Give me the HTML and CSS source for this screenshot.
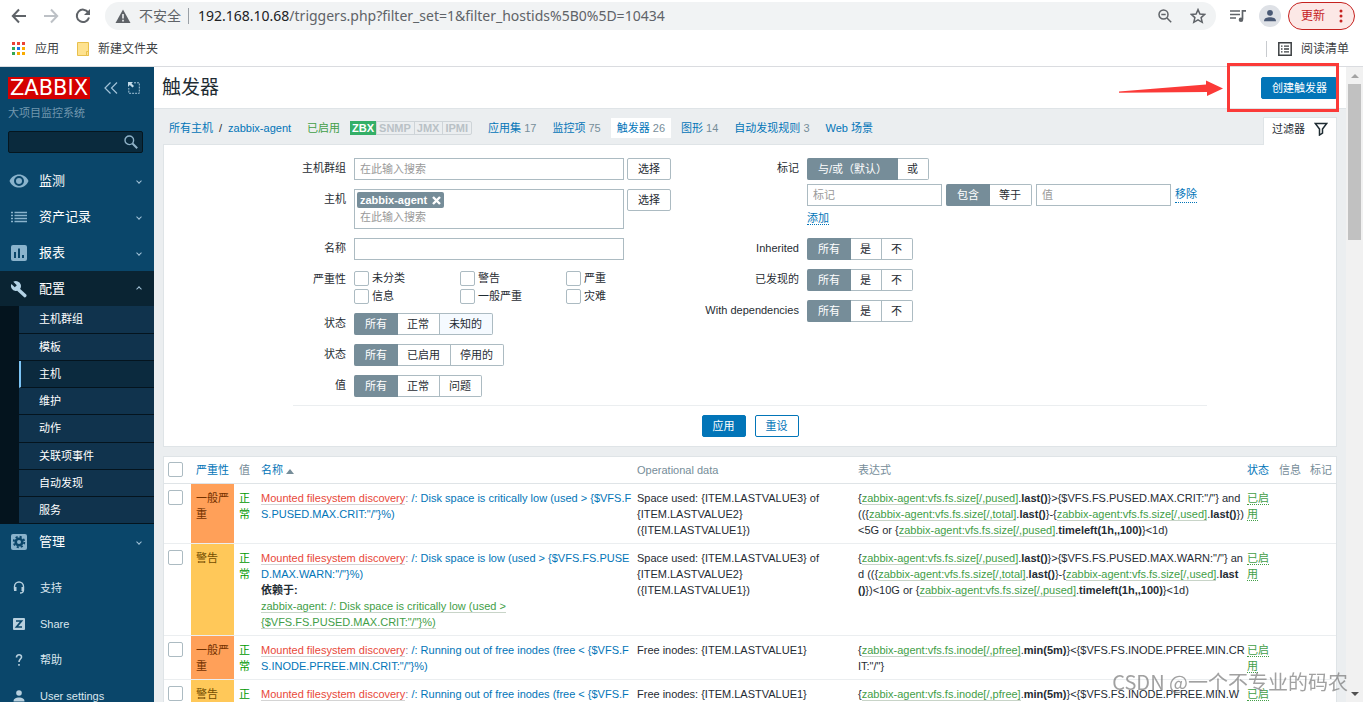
FILE: index.html
```html
<!DOCTYPE html>
<html lang="zh-CN">
<head>
<meta charset="utf-8">
<title>触发器</title>
<link rel="stylesheet" href="styles.css">
</head>
<body>
<div class="browser">
  <div class="toolbar">
    <button class="tool" aria-label="后退"><svg width="16" height="16" viewBox="0 0 16 16"><path d="M15 8H2M8 1.500L1.800 8L8 14.500" fill="none" stroke="#5f6368" stroke-width="2"/></svg></button>
    <button class="tool" aria-label="前进"><svg width="16" height="16" viewBox="0 0 16 16"><path d="M1 8H14M8 1.500L14.200 8L8 14.500" fill="none" stroke="#bdc1c6" stroke-width="2"/></svg></button>
    <button class="tool" aria-label="重新加载"><svg width="16" height="16" viewBox="0 0 16 16"><path d="M13.200 4.400A6.200 6.200 0 1 0 14 9.500" fill="none" stroke="#5f6368" stroke-width="2"/><path d="M15 1V7H9Z" fill="#5f6368"/></svg></button>
    <div class="omnibox">
      <svg width="16" height="15" viewBox="0 0 16 15"><path d="M8 0.500L15.500 14H0.500Z" fill="#5f6368"/><path d="M8 5V9.500M8 10.800V12.400" stroke="#f1f3f4" stroke-width="1.600"/></svg>
      <span class="insecure">不安全</span>
      <span class="url"><b>192.168.10.68</b>/triggers.php?filter_set=1&amp;filter_hostids%5B0%5D=10434</span>
      <svg width="14" height="14" viewBox="0 0 14 14"><g fill="none" stroke="#5f6368" stroke-width="1.500"><circle cx="5.500" cy="5.500" r="4.500"/><path d="M9 9L13.200 13.200M3.300 5.500H7.700"/></g></svg>
      <svg class="star" width="16" height="16" viewBox="0 0 16 16"><path d="M8 1.600L9.900 6L14.700 6.400L11.100 9.600L12.200 14.300L8 11.800L3.800 14.300L4.900 9.600L1.300 6.400L6.100 6Z" fill="none" stroke="#5f6368" stroke-width="1.500"/></svg>
    </div>
    <svg class="media" width="16" height="14" viewBox="0 0 16 14"><path d="M0 2H10M0 5.500H10M0 9H6" stroke="#5f6368" stroke-width="1.700"/><path d="M12.500 10V1.800H16" fill="none" stroke="#5f6368" stroke-width="1.700"/><circle cx="11" cy="10.700" r="2.300" fill="#5f6368"/></svg>
    <svg class="avatar" width="22" height="22" viewBox="0 0 22 22"><circle cx="11" cy="11" r="11" fill="#dee1e6"/><circle cx="11" cy="7.800" r="2.900" fill="#4a5a75"/><path d="M5 16.200C5 13 8 12.200 11 12.200S17 13 17 16.200Z" fill="#4a5a75"/></svg>
    <button class="update">更新<svg width="4" height="14" viewBox="0 0 4 14"><g fill="#c5221f"><circle cx="2" cy="2" r="1.500"/><circle cx="2" cy="7" r="1.500"/><circle cx="2" cy="12" r="1.500"/></g></svg></button>
  </div>
  <div class="bookmarks">
    <a href="#" class="mark"><svg width="14" height="14" viewBox="0 0 14 14"><path d="M0 0h3v3H0zM5 0h3v3H5zM10 0h3v3h-3z" fill="#ea4335"/><path d="M0 5h3v3H0zM0 10h3v3H0z" fill="#34a853"/><path d="M5 5h3v3H5z" fill="#1a73e8"/><path d="M10 5h3v3h-3zM10 10h3v3h-3zM5 10h3v3H5z" fill="#f9ab00"/></svg>应用</a>
    <a href="#" class="mark folder"><svg width="12" height="14" viewBox="0 0 12 14"><path d="M.5.500h11v13H.5z" fill="#fee28f" stroke="#e8c04d"/><path d="M9.500 9.500h2v4h-2z" fill="#fee28f" stroke="#e8c04d"/></svg>新建文件夹</a>
    <a href="#" class="mark reading"><svg width="14" height="14" viewBox="0 0 14 14"><path d="M.8.800h12.400v12.400H.8z" fill="none" stroke="#3c4043" stroke-width="1.500"/><path d="M3 4.200h1.500M6 4.200h5M3 7h1.500M6 7h5M3 9.800h1.500M6 9.800h5" stroke="#3c4043" stroke-width="1.300"/></svg>阅读清单</a>
  </div>
</div>

<div class="page">
  <aside class="sidebar">
    <div class="brand">
      <a href="#" class="logo">ZABBIX</a>
      <svg width="14" height="12" viewBox="0 0 14 12"><path d="M6.500 .5L1 6L6.500 11.500M13 .5L7.500 6L13 11.500" fill="none" stroke="#a3c3d8" stroke-width="1.200"/></svg>
      <svg width="12" height="12" viewBox="0 0 12 12"><path d="M6 .8H11.300V11.300H.8V6" fill="none" stroke="#a3c3d8" stroke-dasharray="2 1"/><path d="M0 0H5L3.500 1.500L6 4L4.500 5.500L1.800 3L0 5Z" fill="#c3dbe9"/></svg>
    </div>
    <div class="server">大项目监控系统</div>
    <div class="search"><input type="text" aria-label="搜索"><svg width="14" height="14" viewBox="0 0 14 14"><g fill="none" stroke="#8fb2c8"><circle cx="5.300" cy="5.300" r="4.300" stroke-width="1.400"/><path d="M8.500 8.500L13.200 13.200" stroke-width="2"/></g></svg></div>
    <nav class="menu">
      <a href="#" class="item"><svg width="20" height="16" viewBox="0 0 20 16"><path d="M.5 8C4-.8 16-.8 19.500 8C16 16.800 4 16.800 .5 8Z" fill="#8ab3cc"/><circle cx="10" cy="8" r="4" fill="none" stroke="#0a466a" stroke-width="2"/></svg><span>监测</span><i class="chev"></i></a>
      <a href="#" class="item"><svg width="20" height="16" viewBox="0 0 20 16"><path d="M5.500 3.500H18M5.500 6.500H18M5.500 9.500H18M5.500 12.500H18" stroke="#8ab3cc" stroke-width="1.300"/><path d="M2 3.500H4M2 6.500H4M2 9.500H4M2 12.500H4" stroke="#8ab3cc" stroke-width="1.300"/></svg><span>资产记录</span><i class="chev"></i></a>
      <a href="#" class="item"><svg width="20" height="18" viewBox="0 0 20 18"><rect x="2" y="1" width="16" height="16" rx="2" fill="#8ab3cc"/><path d="M6 14V8M10 14V4.500M14 14V11" stroke="#0a466a" stroke-width="2"/></svg><span>报表</span><i class="chev"></i></a>
      <a href="#" class="item active"><svg width="20" height="18" viewBox="0 0 20 18"><path d="M9.800 10L15.800 15.600" stroke="#b4d3e6" stroke-width="3.400" stroke-linecap="round"/><path d="M4.300 1.800A5 5 0 1 1 2.400 4L5.800 7.200L7.800 5.200Z" fill="#b4d3e6"/></svg><span>配置</span><i class="chev up"></i></a>
      <div class="submenu">
        <a href="#">主机群组</a><a href="#">模板</a><a href="#" class="current">主机</a><a href="#">维护</a><a href="#">动作</a><a href="#">关联项事件</a><a href="#">自动发现</a><a href="#">服务</a>
      </div>
      <a href="#" class="item"><svg width="20" height="18" viewBox="0 0 20 18"><rect x="2" y="1" width="16" height="16" rx="2" fill="#8ab3cc"/><circle cx="10" cy="9" r="3.300" fill="none" stroke="#0a466a" stroke-width="2.600"/><circle cx="10" cy="9" r="5.300" fill="none" stroke="#0a466a" stroke-width="1.800" stroke-dasharray="2.160 2"/></svg><span>管理</span><i class="chev"></i></a>
    </nav>
    <nav class="links">
      <a href="#"><svg width="12" height="14" viewBox="0 0 12 14"><path d="M1.500 8.500V5.500A4.500 4.500 0 0 1 10.500 5.500V9C10.500 11 9 12 7 12" fill="none" stroke="#b8d0de" stroke-width="1.400"/><path d="M1 6h2.500v4H1zM8.500 6H11v4H8.500z" fill="#b8d0de"/></svg>支持</a>
      <a href="#"><svg width="12" height="12" viewBox="0 0 12 12"><rect width="12" height="12" rx="1" fill="#b8d0de"/><path d="M3 3H8.500L3.500 9H9" fill="none" stroke="#0a466a" stroke-width="1.700"/></svg>Share</a>
      <a href="#"><svg width="12" height="14" viewBox="0 0 12 14"><path d="M3.500 4.500C3.500 .8 8.800 1 8.500 4.200C8.300 6 6 6.400 6 9M6 11V12.800" fill="none" stroke="#b8d0de" stroke-width="1.600"/></svg>帮助</a>
      <a href="#"><svg width="12" height="12" viewBox="0 0 12 12"><circle cx="6" cy="3" r="2.800" fill="#b8d0de"/><path d="M.5 11.500C.5 8.500 3 7.500 6 7.500S11.500 8.500 11.500 11.500Z" fill="#b8d0de"/></svg>User settings</a>
    </nav>
  </aside>

  <main class="main">
    <header class="title">
      <h1>触发器</h1>
      <div class="create">
        <button class="btn primary">创建触发器</button>
        <div class="frame"></div>
        <svg class="arrow" width="104" height="18" viewBox="0 0 104 18"><path d="M0 11.500L87 4.500V0.500L104 8.500L88 16V12L0 12.800Z" fill="#fb3a38"/></svg>
      </div>
    </header>

    <div class="hostbar">
      <nav class="crumbs"><a href="#">所有主机</a><span class="slash">/</span><a href="#">zabbix-agent</a></nav>
      <span class="enabled">已启用</span>
      <div class="badges"><span class="on">ZBX</span><span>SNMP</span><span>JMX</span><span>IPMI</span></div>
      <nav class="tabs">
        <a href="#">应用集 <em>17</em></a><a href="#">监控项 <em>75</em></a><a href="#" class="sel">触发器 <em>26</em></a><a href="#">图形 <em>14</em></a><a href="#">自动发现规则 <em>3</em></a><a href="#">Web 场景</a>
      </nav>
      <button class="filtertab">过滤器<svg width="14" height="14" viewBox="0 0 14 14"><path d="M1.300 1.500H12.700L8.500 7V11L5.500 13V7Z" fill="none" stroke="#1f2c33" stroke-width="1.500"/></svg></button>
    </div>

    <form class="panel filter">
      <div class="fields">
        <div class="col left">
          <label for="groups">主机群组</label>
          <div class="line"><input class="text wide" id="groups" placeholder="在此输入搜索"><button type="button" class="btn plain">选择</button></div>
          <label for="hosts">主机</label>
          <div class="line"><div class="multi"><span class="chip">zabbix-agent<svg width="9" height="9" viewBox="0 0 9 9"><path d="M1 1L8 8M8 1L1 8" stroke="#fff" stroke-width="2.400"/></svg></span><input id="hosts" placeholder="在此输入搜索"></div><button type="button" class="btn plain">选择</button></div>
          <label for="name">名称</label>
          <div class="line"><input class="text wide" id="name"></div>
          <span class="lab">严重性</span>
          <div class="checks">
            <label><input type="checkbox">未分类</label><label><input type="checkbox">警告</label><label><input type="checkbox">严重</label>
            <label><input type="checkbox">信息</label><label><input type="checkbox">一般严重</label><label><input type="checkbox">灾难</label>
          </div>
          <span class="lab">状态</span>
          <div class="seg"><label><input type="radio" name="state" checked><span>所有</span></label><label><input type="radio" name="state"><span>正常</span></label><label class="hover"><input type="radio" name="state"><span>未知的</span></label></div>
          <span class="lab">状态</span>
          <div class="seg"><label><input type="radio" name="status" checked><span>所有</span></label><label><input type="radio" name="status"><span>已启用</span></label><label><input type="radio" name="status"><span>停用的</span></label></div>
          <span class="lab">值</span>
          <div class="seg"><label><input type="radio" name="value" checked><span>所有</span></label><label><input type="radio" name="value"><span>正常</span></label><label><input type="radio" name="value"><span>问题</span></label></div>
        </div>
        <div class="col right">
          <span class="lab">标记</span>
          <div class="tags">
            <div class="seg"><label><input type="radio" name="eval" checked><span>与/或（默认）</span></label><label><input type="radio" name="eval"><span>或</span></label></div>
            <div class="line"><input class="text tag" placeholder="标记" aria-label="标记"><div class="seg"><label><input type="radio" name="op" checked><span>包含</span></label><label><input type="radio" name="op"><span>等于</span></label></div><input class="text tag" placeholder="值" aria-label="值"><a href="#" class="dotted">移除</a></div>
            <div class="add"><a href="#" class="dotted">添加</a></div>
          </div>
          <span class="lab">Inherited</span>
          <div class="seg"><label><input type="radio" name="inh" checked><span>所有</span></label><label><input type="radio" name="inh"><span>是</span></label><label><input type="radio" name="inh"><span>不</span></label></div>
          <span class="lab">已发现的</span>
          <div class="seg"><label><input type="radio" name="disc" checked><span>所有</span></label><label><input type="radio" name="disc"><span>是</span></label><label><input type="radio" name="disc"><span>不</span></label></div>
          <span class="lab">With dependencies</span>
          <div class="seg"><label><input type="radio" name="dep" checked><span>所有</span></label><label><input type="radio" name="dep"><span>是</span></label><label><input type="radio" name="dep"><span>不</span></label></div>
        </div>
      </div>
      <div class="actions"><button type="button" class="btn primary">应用</button><button type="button" class="btn outline">重设</button></div>
    </form>

    <div class="panel list">
      <table>
        <colgroup><col class="c-check"><col class="c-sev"><col class="c-val"><col><col class="c-op"><col class="c-expr"><col class="c-stat"><col class="c-info"><col class="c-info"></colgroup>
        <thead><tr><th><input type="checkbox" aria-label="全选"></th><th><a href="#">严重性</a></th><th>值</th><th><a href="#">名称<i class="asc"></i></a></th><th>Operational data</th><th>表达式</th><th><a href="#">状态</a></th><th>信息</th><th>标记</th></tr></thead>
        <tbody>
          <tr><td><input type="checkbox" aria-label="选择"></td><td class="average">一般严重</td><td class="ok">正常</td>
            <td class="brk"><a href="#" class="disc">Mounted filesystem discovery</a><span class="sep">: </span><a href="#">/: Disk space is critically low (used &gt; {$VFS.F<br>S.PUSED.MAX.CRIT:"/"}%)</a></td>
            <td>Space used: {ITEM.LASTVALUE3} of {ITEM.LASTVALUE2} ({ITEM.LASTVALUE1})</td>
            <td class="brk">{<a href="#" class="it">zabbix-agent:vfs.fs.size[/,pused]</a>.<b>last()</b>}&gt;{$VFS.FS.PUSED.MAX.CRIT:"/"} and<br>(({<a href="#" class="it">zabbix-agent:vfs.fs.size[/,total]</a>.<b>last()</b>}-{<a href="#" class="it">zabbix-agent:vfs.fs.size[/,used]</a>.<b>last()</b>})<br>&lt;5G or {<a href="#" class="it">zabbix-agent:vfs.fs.size[/,pused]</a>.<b>timeleft(1h,,100)</b>}&lt;1d)</td>
            <td><a href="#" class="dotted green">已启用</a></td><td></td><td></td></tr>
          <tr><td><input type="checkbox" aria-label="选择"></td><td class="warning">警告</td><td class="ok">正常</td>
            <td class="brk"><a href="#" class="disc">Mounted filesystem discovery</a><span class="sep">: </span><a href="#">/: Disk space is low (used &gt; {$VFS.FS.PUSE<br>D.MAX.WARN:"/"}%)</a><div class="dep"><b>依赖于:</b><br><a href="#" class="it">zabbix-agent: /: Disk space is critically low (used &gt;<br>{$VFS.FS.PUSED.MAX.CRIT:"/"}%)</a></div></td>
            <td>Space used: {ITEM.LASTVALUE3} of {ITEM.LASTVALUE2} ({ITEM.LASTVALUE1})</td>
            <td class="brk">{<a href="#" class="it">zabbix-agent:vfs.fs.size[/,pused]</a>.<b>last()</b>}&gt;{$VFS.FS.PUSED.MAX.WARN:"/"} an<br>d (({<a href="#" class="it">zabbix-agent:vfs.fs.size[/,total]</a>.<b>last()</b>}-{<a href="#" class="it">zabbix-agent:vfs.fs.size[/,used]</a>.<b>last<br>()</b>})&lt;10G or {<a href="#" class="it">zabbix-agent:vfs.fs.size[/,pused]</a>.<b>timeleft(1h,,100)</b>}&lt;1d)</td>
            <td><a href="#" class="dotted green">已启用</a></td><td></td><td></td></tr>
          <tr><td><input type="checkbox" aria-label="选择"></td><td class="average">一般严重</td><td class="ok">正常</td>
            <td class="brk"><a href="#" class="disc">Mounted filesystem discovery</a><span class="sep">: </span><a href="#">/: Running out of free inodes (free &lt; {$VFS.F<br>S.INODE.PFREE.MIN.CRIT:"/"}%)</a></td>
            <td>Free inodes: {ITEM.LASTVALUE1}</td>
            <td class="brk">{<a href="#" class="it">zabbix-agent:vfs.fs.inode[/,pfree]</a>.<b>min(5m)</b>}&lt;{$VFS.FS.INODE.PFREE.MIN.CR<br>IT:"/"}</td>
            <td><a href="#" class="dotted green">已启用</a></td><td></td><td></td></tr>
          <tr><td><input type="checkbox" aria-label="选择"></td><td class="warning">警告</td><td class="ok">正常</td>
            <td class="brk"><a href="#" class="disc">Mounted filesystem discovery</a><span class="sep">: </span><a href="#">/: Running out of free inodes (free &lt; {$VFS.F<br>S.INODE.PFREE.MIN.WARN:"/"}%)</a></td>
            <td>Free inodes: {ITEM.LASTVALUE1}</td>
            <td class="brk">{<a href="#" class="it">zabbix-agent:vfs.fs.inode[/,pfree]</a>.<b>min(5m)</b>}&lt;{$VFS.FS.INODE.PFREE.MIN.W<br>ARN:"/"}</td>
            <td><a href="#" class="dotted green">已启用</a></td><td></td><td></td></tr>
        </tbody>
      </table>
    </div>
  </main>

  <div class="scrollbar"><i class="up"></i><div class="thumb"></div><i class="down"></i></div>
</div>
<div class="watermark">CSDN @一个不专业的码农</div>
</body>
</html>
```
FILE: styles.css
```css
* { box-sizing: border-box; }
body {
  margin: 0;
  height: 100vh;
  display: flex;
  flex-direction: column;
  overflow: hidden;
  font: 11px/16px "Liberation Sans", "Noto Sans CJK SC", sans-serif;
  color: #1f2c33;
}
a { color: #0275b8; text-decoration: none; }
svg { display: block; flex: none; }
button, input { font: inherit; color: inherit; margin: 0; }
button { padding: 0; border: 0; background: none; white-space: nowrap; }

/* browser chrome */
.browser { flex: none; border-bottom: 1px solid #dadce0; background: #fff; font-family: "Noto Sans", "Noto Sans CJK SC", sans-serif; }
.toolbar { display: flex; align-items: center; height: 32px; padding: 0 8px 0 11px; }
.tool { width: 16px; margin-right: 16px; }
.omnibox { flex: 1; display: flex; align-items: center; height: 28px; margin-left: -2px; padding: 0 10px; border-radius: 14px; background: #f1f3f4; font-size: 14px; color: #5f6368; }
.insecure { margin: 0 9px 0 8px; padding-right: 7px; border-right: 1px solid #9aa0a6; }
.url { flex: 1; white-space: nowrap; }
.url b { font-weight: 400; color: #202124; }
.star { margin-left: 18px; }
.media { margin: 0 13px 0 14px; }
.avatar { margin-right: 7px; }
.update { display: flex; align-items: center; justify-content: space-between; width: 67px; height: 28px; padding: 0 11px 0 12px; border: 1px solid #c5221f; border-radius: 14px; background: #fce8e6; color: #c5221f; font-size: 12px; }
.bookmarks { display: flex; align-items: center; height: 34px; padding: 0 14px 0 12px; font-size: 12px; }
.mark { display: flex; align-items: center; gap: 9px; color: #3c4043; }
.folder { margin-left: 18px; }
.reading { margin-left: auto; padding-left: 11px; border-left: 1px solid #c8cbcf; }

.page { flex: 1; display: flex; min-height: 0; }

/* sidebar */
.sidebar { flex: none; width: 154px; background: #0a466a; overflow: hidden; }
.brand { display: flex; align-items: center; gap: 10px; padding: 10px 0 0 8px; }
.logo { width: 82px; margin-right: 4px; background: #d40000; color: #fff; font: 21px/22px "DejaVu Sans", sans-serif; text-align: center; }
.server { padding: 5px 8px 0; color: #7297ae; line-height: 18px; }
.search { display: flex; align-items: center; height: 22px; margin: 9px 11px 10px 8px; padding-right: 4px; border: 1px solid #05161f; border-radius: 2px; background: #0a2a3d; }
.search input { flex: 1; min-width: 0; border: 0; background: none; color: #fff; outline: 0; }
.item { display: flex; align-items: center; height: 36px; padding: 0 11px 0 9px; color: #fff; font-size: 13px; }
.item span { flex: 1; margin-left: 10px; }
.item.active { height: 35px; background: #0a2433; }
.chev { width: 4px; height: 4px; margin: 0 2px; border: solid #a3c3d8; border-width: 0 1px 1px 0; transform: rotate(45deg); }
.chev.up { transform: rotate(225deg); }
.submenu { padding-left: 19px; background: #04141e; }
.submenu a { display: block; height: 27px; padding-left: 20px; border-bottom: 1px solid #04141e; background: #10334d; color: #fff; line-height: 26px; }
.submenu a:nth-child(4n+1) { height: 28px; }
.submenu .current { padding-left: 18px; border-left: 2px solid #7cc4f5; background: #0b2a3e; }
.links { padding-top: 10px; }
.links a { display: flex; align-items: center; gap: 15px; height: 36px; padding-left: 13px; color: #dbe7ef; }

/* main */
.main { flex: 1; min-width: 0; display: flex; flex-direction: column; background: #ebeef0; }
.title { flex: none; display: flex; align-items: center; justify-content: space-between; height: 42px; padding: 0 9px 0 8px; border-bottom: 1px solid #dfe4e7; background: #fff; }
h1 { margin: 0; font-size: 19px; font-weight: 400; line-height: 24px; }
.create { position: relative; }
.create .btn { display: block; width: 76px; }
.frame { position: absolute; inset: -14px -2px -13px -34px; border: 3px solid #fb3a38; }
.arrow { position: absolute; right: 114px; top: 3px; }
.btn { height: 22px; padding: 0 10px; border: 1px solid #0275b8; border-radius: 2px; line-height: 20px; }
.primary { background: #0275b8; color: #fff; }
.outline { background: #fff; color: #0275b8; }
.plain { border-color: #acbbc2; background: #fff; }

.hostbar { flex: none; display: flex; align-items: center; height: 35px; margin: 0 9px; padding: 3px 0 0 6px; white-space: nowrap; }
.slash { margin: 0 6px; }
.enabled { margin: 0 10px 0 16px; color: #429e47; }
.badges { display: flex; height: 14px; border: 1px solid #ced4d8; border-radius: 2px; line-height: 12px; font-weight: 700; }
.badges span { padding: 0 3px 0 2px; border-right: 1px solid #ced4d8; color: #b9c1c6; }
.badges span:last-child { border-right: 0; }
.badges .on { margin: -1px 0 -1px -1px; padding: 1px 2px 0; background: #34af67; color: #fff; }
.tabs { display: flex; margin-left: 10px; gap: 4px; }
.tabs a { padding: 2px 6px; line-height: 16px; }
.tabs em { font-style: normal; color: #768d99; }
.tabs .sel { background: #fff; }
.filtertab { display: flex; align-items: center; gap: 9px; align-self: flex-end; height: 28px; margin: 0 0 -1px auto; padding: 0 8px 6px; border: 1px solid #dfe4e7; border-bottom: 0; background: #fff; position: relative; }

.panel { flex: none; margin: 0 9px 9px; border: 1px solid #dfe4e7; background: #fff; }
.filter { padding: 13px 0 9px; }
.fields { display: flex; width: 78%; margin: 0 auto; padding-bottom: 8px; border-bottom: 1px solid #ebeef0; }
.col { display: grid; gap: 9px 8px; align-content: start; }
.left { width: 414px; grid-template-columns: 53px 1fr; }
.right { flex: 1; grid-template-columns: 92px 1fr; }
.col > label, .lab { line-height: 20px; text-align: right; white-space: nowrap; }
.lab { justify-self: end; }
.line { display: flex; gap: 4px; align-items: flex-start; }
.left .line { gap: 3px; }
.text { width: 135px; height: 22px; padding: 0 5px; border: 1px solid #acbbc2; background: #fff; outline: 0; }
.wide { width: 270px; }
input::placeholder { color: #9a9a9a; opacity: 1; }
.multi { width: 270px; height: 40px; padding: 2px; border: 1px solid #acbbc2; }
.multi input { display: block; width: 100%; height: 18px; padding: 0 3px; border: 0; outline: 0; }
.chip { display: flex; width: max-content; align-items: center; gap: 5px; padding: 0 3px; border-radius: 2px; background: #768d99; color: #fff; font-weight: 700; }
input[type=checkbox] { appearance: none; flex: none; display: block; width: 15px; height: 15px; border: 1px solid #acbbc2; border-radius: 2px; background: #fff; }
.checks { display: grid; grid-template-columns: repeat(3, 105px); gap: 2px 1px; padding-top: 1px; }
.checks label { display: flex; align-items: center; gap: 3px; }
.seg { display: flex; }
.seg input { position: absolute; opacity: 0; pointer-events: none; }
.seg span { display: block; height: 22px; padding: 0 10px 0 9px; border: 1px solid #acbbc2; border-left-width: 0; line-height: 20px; white-space: nowrap; }
.seg label:first-child span { padding: 0 10px 0 11px; border-radius: 2px 0 0 2px; }
.seg label:last-child span { border-radius: 0 2px 2px 0; }
.seg input:checked + span { border-color: #768d99; background: #768d99; color: #fff; }
.seg .hover span { background: #f5faff; }
.tags { display: grid; gap: 4px; }
.dotted { border-bottom: 1px dotted; }
.tags .line .dotted { margin-top: 3px; line-height: 15px; }
.add { line-height: 16px; padding-bottom: 3px; }
.actions { display: flex; justify-content: center; gap: 9px; padding-top: 9px; }

/* table */
table { width: 100%; table-layout: fixed; border-collapse: collapse; }
.c-check { width: 27px; }
.c-sev { width: 43px; }
.c-val { width: 22px; }
.c-op { width: 221px; }
.c-expr { width: 389px; }
.c-stat { width: 32px; }
.c-info { width: 31px; }
th { height: 26px; padding: 0 4px 0 5px; border-bottom: 1px solid #dfe4e7; color: #768d99; font-weight: 400; text-align: left; white-space: nowrap; }
td { padding: 6px 4px 5px 5px; border-bottom: 1px solid #ebeef0; vertical-align: top; }
th:first-child, td:first-child { padding-left: 4px; }
.asc { display: inline-block; margin-left: 3px; border: solid transparent; border-width: 0 4px 5px; border-bottom-color: #768d99; }
.brk { white-space: nowrap; }
.average { background: #ffa059; color: #733100; }
.warning { background: #ffc859; color: #734d00; }
.ok { color: #090; }
.sep { color: #768d99; }
.disc { color: #e8483a; border-bottom: 1px solid #d4d4d4; }
.it { color: #429e47; border-bottom: 1px solid #c8d4c8; }
.green { color: #429e47; }

/* scrollbar */
.scrollbar { flex: none; display: flex; flex-direction: column; align-items: center; width: 17px; padding: 7px 0 6px; background: #f1f1f1; }
.scrollbar .up { border: solid transparent; border-width: 0 4px 4px; border-bottom-color: #a3a3a3; }
.scrollbar .down { margin-top: auto; border: solid transparent; border-width: 4px 4px 0; border-top-color: #505050; }
.thumb { width: 13px; height: 25%; margin-top: 6px; background: #c1c1c1; }

.watermark { position: fixed; right: 15px; bottom: 6px; color: rgba(110, 110, 110, 0.65); font: 20px/28px "Noto Sans CJK SC", sans-serif; }
```
